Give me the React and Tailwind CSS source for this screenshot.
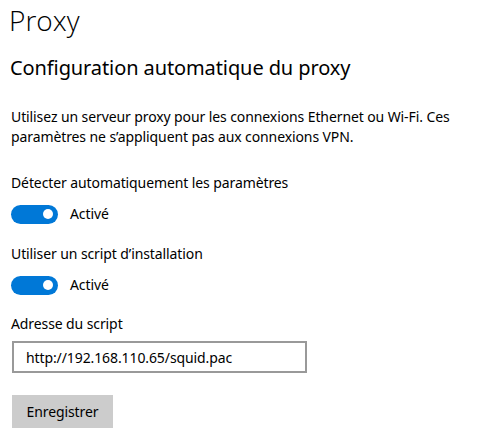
import React from "react";

function Toggle() {
  return (
    <div className="flex items-center gap-[12px]">
      <div className="w-[47px] h-[19px] rounded-full bg-[#0078d7] flex items-center justify-end pr-[5px]">
        <div className="w-[10px] h-[10px] rounded-full bg-white" />
      </div>
      <span className="text-[14px] leading-[20px] tracking-[-0.1px] text-black">Activé</span>
    </div>
  );
}

export default function App() {
  return (
    <div
      className="w-[478px] h-[444px] bg-white text-black pl-[11px] pt-[2px]"
      style={{ fontFamily: '"Segoe UI", "Noto Sans", "Open Sans", sans-serif' }}
    >
      <h1
        className="text-[28px] leading-[36px] ml-[-2px] font-[350]"
        style={{ fontFamily: '"Open Sans", "Noto Sans", sans-serif' }}
      >
        Proxy
      </h1>
      <h2 className="mt-[16px] text-[20px] leading-[28px] ml-[-1px] font-normal tracking-[-0.1px]">
        Configuration automatique du proxy
      </h2>
      <p className="mt-[25px] text-[14px] leading-[20px] w-[460px] tracking-[-0.1px]">
        Utilisez un serveur proxy pour les connexions Ethernet ou Wi-Fi. Ces paramètres ne s’appliquent pas aux connexions VPN.
      </p>
      <div className="mt-[26px] text-[14px] leading-[20px] tracking-[-0.1px]">Détecter automatiquement les paramètres</div>
      <div className="mt-[11px]">
        <Toggle />
      </div>
      <div className="mt-[20px] text-[14px] leading-[20px] tracking-[-0.1px]">Utiliser un script d’installation</div>
      <div className="mt-[11px]">
        <Toggle />
      </div>
      <div className="mt-[19px] text-[14px] leading-[20px] tracking-[-0.1px]">Adresse du script</div>
      <div className="mt-[7px] ml-[1px] w-[295px] h-[32px] border-2 border-[#999999] flex items-center pl-[12px] text-[14px] tracking-[-0.1px]">
        http://192.168.110.65/squid.pac
      </div>
      <button className="mt-[22px] ml-[1px] w-[101px] h-[33px] bg-[#cccccc] text-[14px] text-black tracking-[-0.1px]">
        Enregistrer
      </button>
    </div>
  );
}
